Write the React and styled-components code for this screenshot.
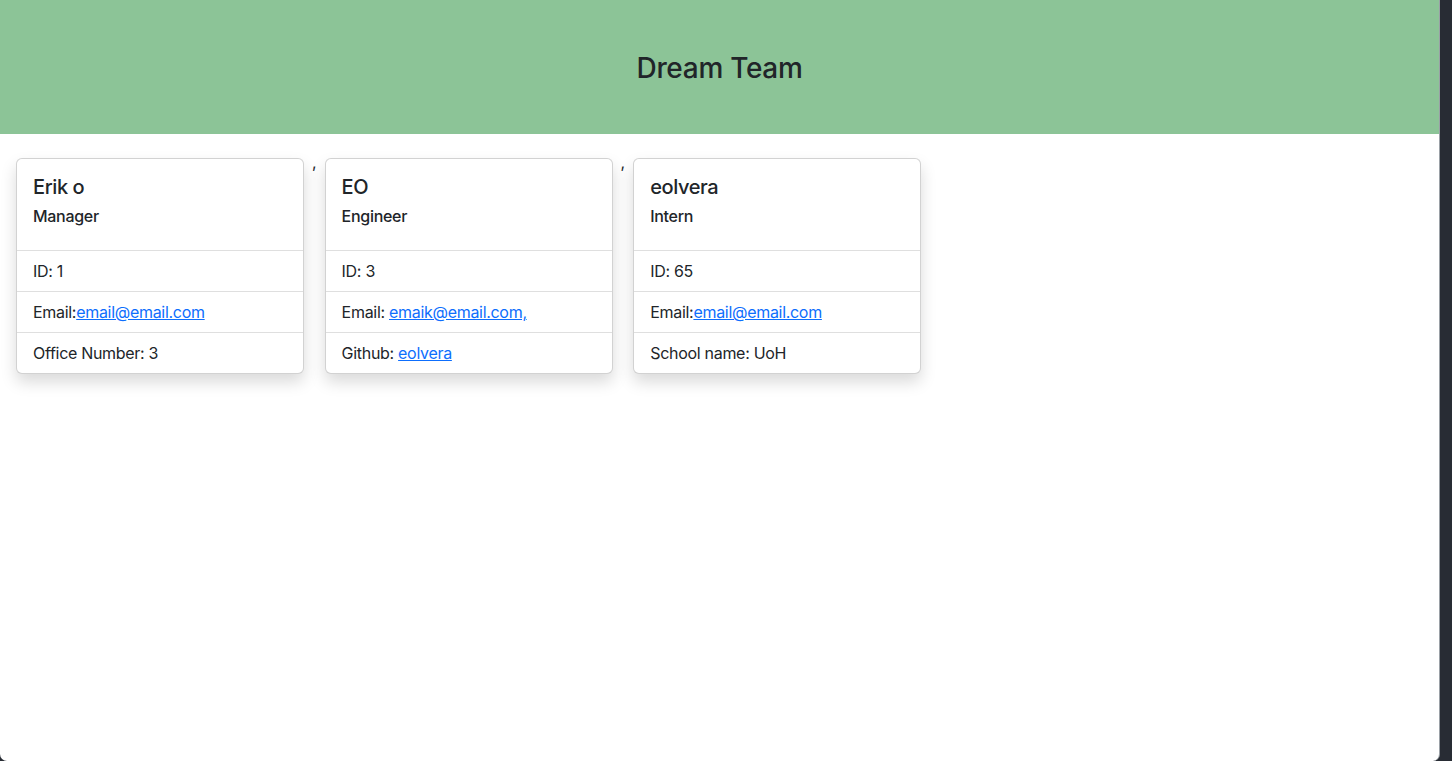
import React from "react";
import styled, { createGlobalStyle } from "styled-components";

const Global = createGlobalStyle`
  html, body { margin: 0; padding: 0; height: 100%; }
  body {
    background: #282c34;
    font-family: Inter, "Noto Sans", "Liberation Sans", sans-serif;
    color: #212529;
    -webkit-font-smoothing: antialiased;
  }
  * { box-sizing: border-box; }
`;

const Page = styled.div`
  width: 1440px;
  height: 761px;
  background: #ffffff;
  border-radius: 0 0 7px 7px;
  overflow: hidden;
  border-right: 1px solid #9aa0a6;
`;

const Header = styled.header`
  height: 134px;
  padding-top: 3px;
  background: #8cc497;
  display: flex;
  align-items: center;
  justify-content: center;
`;

const Title = styled.h1`
  margin: 0;
  font-size: 28px;
  font-weight: 500;
  line-height: 1.2;
  letter-spacing: -0.3px;
`;

const Row = styled.main`
  display: flex;
  align-items: flex-start;
  gap: 8px;
  padding: 16px 16px;
`;

const Comma = styled.span`
  font-size: 16px;
  line-height: 24px;
`;

const Card = styled.section`
  width: 288px;
  margin-top: 8px;
  background: #fff;
  border: 1px solid rgba(0, 0, 0, 0.175);
  border-radius: 6px;
  box-shadow: 0 8px 16px rgba(0, 0, 0, 0.15);
  overflow: hidden;
`;

const CardBody = styled.div`
  padding: 16px;
`;

const Name = styled.h5`
  margin: 0 0 8px;
  font-size: 20px;
  font-weight: 500;
  line-height: 24px;
  letter-spacing: -0.4px;
`;

const Role = styled.h6`
  margin: 0 0 8px;
  font-size: 16px;
  font-weight: 500;
  line-height: 19px;
  letter-spacing: -0.3px;
`;

const List = styled.ul`
  list-style: none;
  margin: 0;
  padding: 0;
`;

const Item = styled.li`
  padding: 8px 16px;
  font-size: 16px;
  line-height: 24px;
  border-top: 1px solid rgba(0, 0, 0, 0.125);
  letter-spacing: -0.3px;
`;

const Link = styled.a`
  color: #0d6efd;
  text-decoration: underline;
`;

const team = [
  {
    name: "Erik o",
    role: "Manager",
    id: 1,
    email: { label: "Email:", text: "email@email.com" },
    extra: { label: "Office Number: 3" },
  },
  {
    name: "EO",
    role: "Engineer",
    id: 3,
    email: { label: "Email: ", text: "emaik@email.com," },
    extra: { label: "Github: ", link: "eolvera" },
  },
  {
    name: "eolvera",
    role: "Intern",
    id: 65,
    email: { label: "Email:", text: "email@email.com" },
    extra: { label: "School name: UoH" },
  },
];

export default function App() {
  return (
    <>
      <Global />
      <Page>
        <Header>
          <Title>Dream Team</Title>
        </Header>
        <Row>
          {team.map((m, i) => (
            <React.Fragment key={m.name}>
              {i > 0 && <Comma>,</Comma>}
              <Card>
                <CardBody>
                  <Name>{m.name}</Name>
                  <Role>{m.role}</Role>
                </CardBody>
                <List>
                  <Item>ID: {m.id}</Item>
                  <Item>
                    {m.email.label}
                    <Link href="#">{m.email.text}</Link>
                  </Item>
                  <Item>
                    {m.extra.label}
                    {m.extra.link && <Link href="#">{m.extra.link}</Link>}
                  </Item>
                </List>
              </Card>
            </React.Fragment>
          ))}
        </Row>
      </Page>
    </>
  );
}
